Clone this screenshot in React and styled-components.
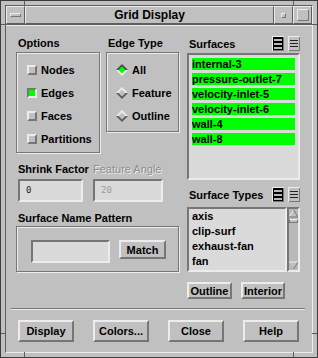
import React from "react";
import styled, { createGlobalStyle, css } from "styled-components";

const BG = "#c0c0c0";
const LIGHT = "#ececec";
const DARK = "#767676";
const FIELD = "#dadada";
const GREEN = "#00ff00";

const GlobalStyle = createGlobalStyle`
  html, body { margin: 0; padding: 0; background: ${BG}; }
  body {
    font-family: "Liberation Sans", Arial, sans-serif;
    font-size: 11px;
    font-weight: bold;
    color: #000;
  }
  * { box-sizing: border-box; }
`;

const raised = css`
  border: 2px solid;
  border-color: ${LIGHT} ${DARK} ${DARK} ${LIGHT};
`;
const sunken = css`
  border: 2px solid;
  border-color: ${DARK} ${LIGHT} ${LIGHT} ${DARK};
`;

const Window = styled.div`
  position: relative;
  width: 318px;
  height: 358px;
  border: 1px solid #3c3c3c;
  background: ${BG};
  padding: 4px;
  display: flex;
`;

const Notch = styled.span`
  position: absolute;
  background: #5e5e5e;
  ${(p) =>
    p.$v
      ? css`
          width: 1px;
          height: 5px;
          left: ${p.$x}px;
          ${p.$bottom ? "bottom: 0;" : "top: 0;"}
        `
      : css`
          height: 1px;
          width: 5px;
          top: ${p.$y}px;
          ${p.$right ? "right: 0;" : "left: 0;"}
        `}
`;

const Frame = styled.div`
  flex: 1;
  display: flex;
  flex-direction: column;
  border: 1px solid;
  border-color: #5e5e5e ${LIGHT} ${LIGHT} #5e5e5e;
`;

const TitleBar = styled.div`
  display: flex;
  height: 19px;
  border-bottom: 1px solid #5e5e5e;
`;

const TitleCell = styled.div`
  width: ${(p) => (p.$w ? `${p.$w}px` : "auto")};
  flex: ${(p) => (p.$w ? "none" : 1)};
  border: 1px solid;
  border-color: ${LIGHT} #5e5e5e #5e5e5e ${LIGHT};
  display: flex;
  align-items: center;
  justify-content: center;
  font-size: 12px;
`;

const MenuBar = styled.span`
  width: 11px;
  height: 4px;
  border: 1px solid;
  border-color: ${LIGHT} ${DARK} ${DARK} ${LIGHT};
`;

const WinBox = styled.span`
  width: ${(p) => p.$s}px;
  height: ${(p) => p.$s}px;
  border: 1px solid;
  border-color: ${LIGHT} ${DARK} ${DARK} ${LIGHT};
`;

const Content = styled.div`
  flex: 1;
  display: flex;
  flex-direction: column;
  padding: 10px 11px 0 10px;
  border-top: 1px solid ${LIGHT};
`;

const Body = styled.div`
  display: flex;
  gap: 8px;
`;

const LeftCol = styled.div`
  width: 163px;
  display: flex;
  flex-direction: column;
`;

const GroupRow = styled.div`
  display: flex;
  gap: 6px;
  align-items: flex-start;
`;

const Group = styled.div`
  width: ${(p) => p.$w}px;
  display: flex;
  flex-direction: column;
  gap: 2px;
`;

const Label = styled.div`
  height: 14px;
  line-height: 14px;
  padding-left: ${(p) => (p.$flush ? 0 : 2)}px;
  white-space: nowrap;
  ${(p) =>
    p.$disabled &&
    css`
      color: #8e8e8e;
      font-weight: normal;
      text-shadow: 1px 1px 0 ${LIGHT};
    `}
`;

const Etched = styled.div`
  height: ${(p) => p.$h}px;
  border: 1px solid ${DARK};
  box-shadow: inset 1px 1px 0 ${LIGHT}, 1px 1px 0 ${LIGHT};
  padding: ${(p) => p.$pad};
  display: flex;
  flex-direction: ${(p) => (p.$row ? "row" : "column")};
  align-items: flex-start;
  gap: ${(p) => p.$gap || 0}px;
`;

const OptionRow = styled.div`
  height: 23px;
  display: flex;
  align-items: center;
  gap: ${(p) => p.$gap}px;
`;

const Check = styled.span`
  width: 10px;
  height: 10px;
  ${(p) => (p.$on ? sunken : raised)};
  background: ${(p) => (p.$on ? GREEN : BG)};
`;

const Diamond = ({ on }) => (
  <svg width="12" height="12" viewBox="0 0 12 12">
    <polygon points="0,6 6,0 12,6" fill={on ? "#4a4a4a" : LIGHT} />
    <polygon points="0,6 6,12 12,6" fill={on ? LIGHT : "#5a5a5a"} />
    <polygon points="6,2.5 9.5,6 6,9.5 2.5,6" fill={on ? GREEN : BG} />
  </svg>
);

const FieldRow = styled.div`
  display: flex;
  gap: 10px;
  padding-left: 2px;
  margin-top: 9px;
`;

const Field = styled.div`
  width: ${(p) => p.$w}px;
  display: flex;
  flex-direction: column;
  gap: 3px;
`;

const Input = styled.div`
  width: ${(p) => p.$w}px;
  height: 23px;
  ${sunken};
  background: ${FIELD};
  padding-left: 6px;
  font-family: "DejaVu Sans Mono", "Liberation Mono", monospace;
  font-weight: normal;
  font-size: 9px;
  line-height: 19px;
  color: ${(p) => (p.$disabled ? "#9a9a9a" : "#222")};
`;

const Pattern = styled.div`
  display: flex;
  flex-direction: column;
  gap: 1px;
  margin-top: 9px;
`;

const Button = styled.button`
  width: ${(p) => p.$w}px;
  height: ${(p) => p.$h}px;
  ${raised};
  background: ${BG};
  padding: 0;
  font-family: "Liberation Sans", Arial, sans-serif;
  font-weight: bold;
  font-size: 11px;
  color: #000;
`;

const RightCol = styled.div`
  width: 113px;
  display: flex;
  flex-direction: column;
`;

const ListHeader = styled.div`
  height: 15px;
  margin-top: ${(p) => p.$mt || 0}px;
  display: flex;
  align-items: center;
  justify-content: space-between;
`;

const IconPair = styled.div`
  display: flex;
  gap: 4px;
`;

const SelectAllIcon = () => (
  <svg width="12" height="15" viewBox="0 0 12 15">
    <rect width="12" height="15" fill={LIGHT} />
    <rect x="1" y="1" width="11" height="14" fill={DARK} />
    <rect x="1" y="1" width="10" height="13" fill="#000" />
    <rect x="2" y="3" width="8" height="2" fill="#b8b8b8" />
    <rect x="2" y="7" width="8" height="2" fill="#b8b8b8" />
    <rect x="2" y="11" width="8" height="2" fill="#b8b8b8" />
  </svg>
);

const DeselectIcon = () => (
  <svg width="12" height="15" viewBox="0 0 12 15">
    <rect width="12" height="15" fill={LIGHT} />
    <rect x="1" y="1" width="11" height="14" fill={DARK} />
    <rect x="1" y="1" width="10" height="13" fill={BG} />
    <rect x="2" y="4" width="8" height="1" fill="#222" />
    <rect x="2" y="7" width="8" height="1" fill="#222" />
    <rect x="2" y="10" width="8" height="1" fill="#222" />
  </svg>
);

const ListBox = styled.div`
  height: ${(p) => p.$h}px;
  margin-top: ${(p) => p.$mt}px;
  flex: ${(p) => (p.$grow ? 1 : "none")};
  ${sunken};
  background: ${FIELD};
  padding: ${(p) => p.$pad};
  display: flex;
  flex-direction: column;
  gap: 3px;
  overflow: hidden;
`;

const Item = styled.div`
  height: 12px;
  line-height: 12px;
  white-space: nowrap;
  background: ${(p) => (p.$sel ? GREEN : "transparent")};
`;

const ScrollWrap = styled.div`
  display: flex;
  height: 65px;
  margin-top: 5px;
`;

const Scroll = styled.div`
  width: 13px;
  ${sunken};
  background: #b8b8b8;
  display: flex;
`;

const ScrollArt = () => (
  <svg width="9" height="61" viewBox="0 0 9 61">
    <polygon points="4.5,1 0,8 9,8" fill={BG} />
    <polyline points="0,8 4.5,1" stroke={LIGHT} fill="none" />
    <polyline points="4.5,1 9,8 0,8" stroke={DARK} fill="none" />
    <rect x="0.5" y="10.5" width="8" height="3" fill={BG} stroke={DARK} />
    <line x1="0.5" y1="10.5" x2="8.5" y2="10.5" stroke={LIGHT} />
    <polygon points="0,53 9,53 4.5,60" fill={BG} />
    <polyline points="0,53 9,53" stroke={LIGHT} fill="none" />
    <polyline points="9,53 4.5,60" stroke={DARK} fill="none" />
  </svg>
);

const SmallButtons = styled.div`
  display: flex;
  gap: 9px;
  margin-top: 10px;
`;

const Separator = styled.div`
  margin: 9px -4px 0 -5px;
  height: 2px;
  border-top: 1px solid ${DARK};
  border-bottom: 1px solid ${LIGHT};
`;

const ButtonRow = styled.div`
  display: flex;
  gap: 19px;
  padding-left: 2px;
  margin-top: 10px;
`;

const options = [
  { label: "Nodes", on: false },
  { label: "Edges", on: true },
  { label: "Faces", on: false },
  { label: "Partitions", on: false },
];
const edgeTypes = [
  { label: "All", on: true },
  { label: "Feature", on: false },
  { label: "Outline", on: false },
];
const surfaces = [
  "internal-3",
  "pressure-outlet-7",
  "velocity-inlet-5",
  "velocity-inlet-6",
  "wall-4",
  "wall-8",
];
const surfaceTypes = ["axis", "clip-surf", "exhaust-fan", "fan"];

export default function App() {
  return (
    <>
      <GlobalStyle />
      <Window>
        <Notch $v $x={23} />
        <Notch $v $x={292} />
        <Notch $v $bottom $x={23} />
        <Notch $v $bottom $x={292} />
        <Notch $y={23} />
        <Notch $y={23} $right />
        <Notch $y={332} />
        <Notch $y={332} $right />
        <Frame>
          <TitleBar>
            <TitleCell $w={19}>
              <MenuBar />
            </TitleCell>
            <TitleCell>Grid Display</TitleCell>
            <TitleCell $w={19}>
              <WinBox $s={5} />
            </TitleCell>
            <TitleCell $w={19}>
              <WinBox $s={12} />
            </TitleCell>
          </TitleBar>
          <Content>
            <Body>
              <LeftCol>
                <GroupRow>
                  <Group $w={84}>
                    <Label>Options</Label>
                    <Etched $h={101} $pad="5px 0 0 10px">
                      {options.map((o) => (
                        <OptionRow key={o.label} $gap={4}>
                          <Check $on={o.on} />
                          {o.label}
                        </OptionRow>
                      ))}
                    </Etched>
                  </Group>
                  <Group $w={73}>
                    <Label>Edge Type</Label>
                    <Etched $h={80} $pad="5px 0 0 9px">
                      {edgeTypes.map((o) => (
                        <OptionRow key={o.label} $gap={4}>
                          <Diamond on={o.on} />
                          {o.label}
                        </OptionRow>
                      ))}
                    </Etched>
                  </Group>
                </GroupRow>
                <FieldRow>
                  <Field $w={65}>
                    <Label $flush>Shrink Factor</Label>
                    <Input $w={65}>0</Input>
                  </Field>
                  <Field $w={70}>
                    <Label $flush $disabled>
                      Feature Angle
                    </Label>
                    <Input $w={70} $disabled>
                      20
                    </Input>
                  </Field>
                </FieldRow>
                <Pattern>
                  <Label>Surface Name Pattern</Label>
                  <Etched $h={46} $row $gap={9} $pad="13px 0 0 14px">
                    <Input $w={79} />
                    <Button $w={47} $h={19}>
                      Match
                    </Button>
                  </Etched>
                </Pattern>
              </LeftCol>
              <RightCol>
                <ListHeader>
                  <Label>Surfaces</Label>
                  <IconPair>
                    <SelectAllIcon />
                    <DeselectIcon />
                  </IconPair>
                </ListHeader>
                <ListBox $h={127} $mt={2} $pad="3px 3px">
                  {surfaces.map((s) => (
                    <Item key={s} $sel>
                      {s}
                    </Item>
                  ))}
                </ListBox>
                <ListHeader $mt={7}>
                  <Label>Surface Types</Label>
                  <IconPair>
                    <SelectAllIcon />
                    <DeselectIcon />
                  </IconPair>
                </ListHeader>
                <ScrollWrap>
                  <ListBox $grow $h={65} $mt={0} $pad="1px 3px">
                    {surfaceTypes.map((s) => (
                      <Item key={s}>{s}</Item>
                    ))}
                  </ListBox>
                  <Scroll>
                    <ScrollArt />
                  </Scroll>
                </ScrollWrap>
                <SmallButtons>
                  <Button $w={45} $h={17}>
                    Outline
                  </Button>
                  <Button $w={44} $h={17}>
                    Interior
                  </Button>
                </SmallButtons>
              </RightCol>
            </Body>
            <Separator />
            <ButtonRow>
              <Button $w={56} $h={22}>
                Display
              </Button>
              <Button $w={56} $h={22}>
                Colors...
              </Button>
              <Button $w={56} $h={22}>
                Close
              </Button>
              <Button $w={56} $h={22}>
                Help
              </Button>
            </ButtonRow>
          </Content>
        </Frame>
      </Window>
    </>
  );
}
